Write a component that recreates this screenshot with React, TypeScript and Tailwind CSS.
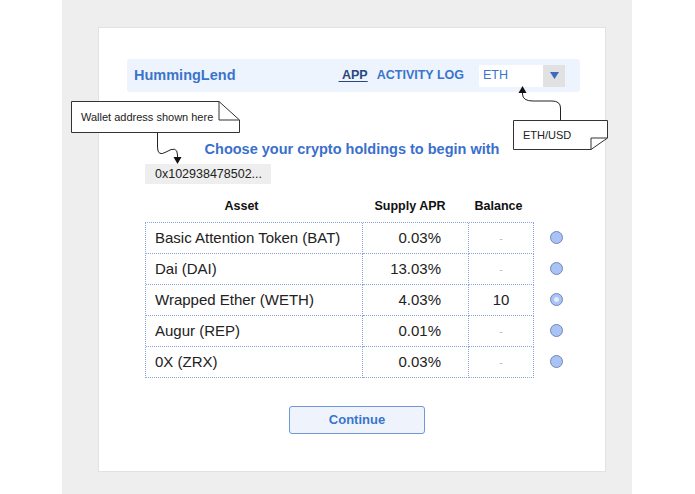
import React from "react";

const rows = [
  { asset: "Basic Attention Token (BAT)", apr: "0.03%", balance: "-" },
  { asset: "Dai (DAI)", apr: "13.03%", balance: "-" },
  { asset: "Wrapped Ether (WETH)", apr: "4.03%", balance: "10", selected: true },
  { asset: "Augur (REP)", apr: "0.01%", balance: "-" },
  { asset: "0X (ZRX)", apr: "0.03%", balance: "-" },
];

function NoteTopFold({ className, text }: { className: string; text: string }) {
  // drawio style note with folded top-right corner
  return (
    <div className={`absolute ${className}`}>
      <svg className="absolute inset-0 h-full w-full overflow-visible" viewBox="0 0 169 32" preserveAspectRatio="none">
        <path d="M0.5 0.5 H148 L168.5 19 V31.5 H0.5 Z" fill="white" stroke="#333" strokeWidth="1" />
        <path d="M148 0.5 V19 H168.5" fill="none" stroke="#333" strokeWidth="1" />
      </svg>
      <div className="relative flex h-full items-center pl-[10px] text-[11px] text-[#222]">{text}</div>
    </div>
  );
}

function NoteBottomFold({ className, text }: { className: string; text: string }) {
  return (
    <div className={`absolute ${className}`}>
      <svg className="absolute inset-0 h-full w-full overflow-visible" viewBox="0 0 95 30" preserveAspectRatio="none">
        <path d="M0.5 0.5 H94.5 V18 L78 29.5 H0.5 Z" fill="white" stroke="#333" strokeWidth="1" />
        <path d="M78 29.5 V18 H94.5" fill="none" stroke="#333" strokeWidth="1" />
      </svg>
      <div className="relative flex h-full items-center pl-[10px] text-[11px] text-[#222]">{text}</div>
    </div>
  );
}

export default function App() {
  return (
    <div className="relative h-[494px] w-[695px] overflow-hidden bg-white font-['Liberation_Sans',Arial,sans-serif]">
      <div className="ml-[62px] h-full w-[570px] bg-[#eeeeee] pt-[27px]">
        <div className="ml-[36px] h-[445px] w-[508px] border border-[#e2e2e2] bg-white pt-[31px]">
          {/* Nav */}
          <div className="ml-[28px] mr-[25px] flex h-[33px] items-center rounded-[3px] bg-[#eef4fd] pl-[7px] pr-[15px]">
            <div className="text-[14.5px] font-bold text-[#3a74cc]">HummingLend</div>
            <div className="flex-1" />
            <div className="text-[12.5px] font-bold text-[#27497e] underline underline-offset-2">&nbsp;APP</div>
            <div className="ml-[9px] text-[12.5px] font-bold text-[#3a74cc]">ACTIVITY LOG</div>
            <div className="ml-[15px] flex h-[22px] w-[86px] items-stretch bg-white">
              <div className="flex flex-1 items-center pl-[4px] text-[12.5px] text-[#3a74cc]">ETH</div>
              <div className="flex w-[22px] items-center justify-center bg-[#e1e1e1]">
                <svg width="9" height="7" viewBox="0 0 9 7">
                  <path d="M0 0 H9 L4.5 7 Z" fill="#3a6cc0" />
                </svg>
              </div>
            </div>
          </div>

          {/* Heading */}
          <div className="mt-[49px] text-center text-[14.5px] font-bold leading-4 text-[#3a6fcc]">
            Choose your crypto holdings to begin with
          </div>

          {/* Address */}
          <div className="ml-[46px] mt-[7px] flex h-[20px] w-[126px] items-center bg-[#eeeeee] pl-[10px] text-[12.5px] text-[#222]">
            0x102938478502...
          </div>

          {/* Table */}
          <div className="ml-[46px] mt-[14px]">
            <div className="flex h-[16px] items-center text-[12.5px] font-bold text-[#111]">
              <div className="w-[217px] pr-[24px] text-center">Asset</div>
              <div className="w-[106px] pr-[10px] text-center">Supply APR</div>
              <div className="w-[65px] pr-[4px] text-center">Balance</div>
            </div>
            <div className="mt-[8px] flex items-start gap-[16px]">
              <div className="w-[389px] border-l border-t border-dotted border-[#8aa6da]">
                {rows.map((r) => (
                  <div key={r.asset} className="flex h-[31px] text-[15px] text-[#222]">
                    <div className="flex w-[217px] items-center border-b border-r border-dotted border-[#8aa6da] pl-[9px]">
                      {r.asset}
                    </div>
                    <div className="flex w-[106px] items-center justify-end border-b border-r border-dotted border-[#8aa6da] pr-[27px]">
                      {r.apr}
                    </div>
                    <div
                      className={`flex w-[65px] items-center justify-center border-b border-r border-dotted border-[#8aa6da] ${
                        r.balance === "-" ? "text-[11px] text-[#bbbbbb]" : "text-[15px] text-[#222]"
                      }`}
                    >
                      {r.balance}
                    </div>
                  </div>
                ))}
              </div>
              <div className="flex flex-col">
                {rows.map((r) => (
                  <div key={r.asset} className="flex h-[31px] items-center">
                    <div className="flex h-[13px] w-[13px] items-center justify-center rounded-full border border-[#7387b4] bg-[#a9c3f6]">
                      {r.selected && <div className="h-[5px] w-[5px] rounded-full bg-[#e4e9f6]" />}
                    </div>
                  </div>
                ))}
              </div>
            </div>
          </div>

          {/* Continue */}
          <button className="ml-[190px] mt-[28px] flex h-[28px] w-[136px] items-center justify-center rounded-[3px] border border-[#6f98da] bg-[#eff4fc] text-[13px] font-bold text-[#3a74cc]">
            Continue
          </button>
        </div>
      </div>

      {/* Annotations */}
      <NoteTopFold className="left-[71px] top-[101px] h-[32px] w-[169px]" text="Wallet address shown here" />
      <NoteBottomFold className="left-[513px] top-[120px] h-[30px] w-[95px]" text="ETH/USD" />
      <svg className="pointer-events-none absolute inset-0" width="695" height="494" viewBox="0 0 695 494">
        <path d="M157.5 133 V147 Q157.5 157 166 152 Q177.5 145 177.5 155 V157" fill="none" stroke="#222" strokeWidth="1" />
        <path d="M173.5 157 H181.5 L177.5 164 Z" fill="#111" />
        <path d="M560.5 120 V108 Q560.5 101 552 101 H533 Q522.5 101 522.5 94 V93" fill="none" stroke="#222" strokeWidth="1" />
        <path d="M518.5 93 H526.5 L522.5 86 Z" fill="#111" />
      </svg>
    </div>
  );
}
